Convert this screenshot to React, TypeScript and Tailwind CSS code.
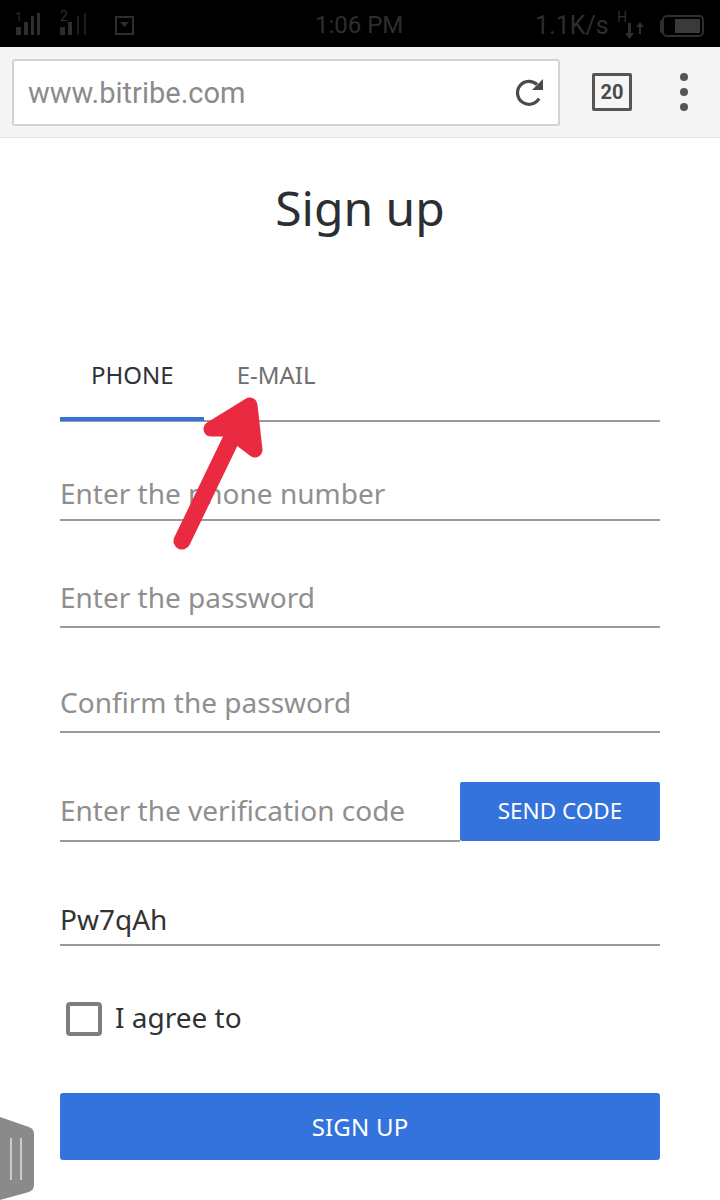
const noto = "font-['Noto_Sans',sans-serif]";

function Field({ text, dark, height }: { text: string; dark?: boolean; height: string }) {
  return (
    <div className={`flex items-center border-b-2 border-[#9a9a9a] pb-[2px] ${height} ${dark ? "text-[#333]" : "text-[#8f8f8f]"} text-[28px] leading-none`}>
      {text}
    </div>
  );
}

export default function App() {
  return (
    <div className={`relative w-[720px] h-[1200px] overflow-hidden bg-white ${noto}`}>
      <div className="flex h-[47px] items-center bg-black pt-[3px] font-['Roboto',sans-serif] text-[#2e2e2e]">
        <svg width="140" height="36" viewBox="0 0 140 36" className="ml-[12px] shrink-0" fill="#2e2e2e">
          <text x="3" y="14" fontSize="13">1</text>
          <rect x="4" y="20" width="5" height="8" />
          <rect x="12" y="15" width="4" height="13" />
          <rect x="19" y="9" width="3" height="19" />
          <rect x="25" y="6" width="3" height="22" />
          <text x="48" y="14" fontSize="14">2</text>
          <rect x="48" y="20" width="5" height="8" />
          <rect x="56" y="15" width="4" height="13" />
          <rect x="65" y="9" width="2" height="19" fill="#1d1d1d" />
          <rect x="72" y="6" width="2" height="22" fill="#1d1d1d" />
          <rect x="104" y="10" width="17" height="17" fill="none" stroke="#2e2e2e" strokeWidth="2" />
          <path d="M108 15h9l-4.500 5z" />
        </svg>
        <span className="ml-[163px] w-[90px] shrink-0 whitespace-nowrap text-[24px] leading-none">1:06 PM</span>
        <span className="ml-[130px] w-[73px] shrink-0 whitespace-nowrap text-[25px] leading-none">1.1K/s</span>
        <svg width="112" height="40" viewBox="0 0 112 40" className="shrink-0" fill="#2e2e2e">
          <text x="9" y="17" fontSize="14">H</text>
          <path d="M20 18h3v10h3l-4.500 6-4.500-6h3zM31 29v-7h-3l4-5 4 5h-3v7z" />
          <rect x="52" y="15" width="2" height="13" rx="1" />
          <rect x="55" y="11" width="40" height="20" rx="4" fill="none" stroke="#2e2e2e" strokeWidth="2" />
          <rect x="67" y="14" width="25" height="14" fill="#3a3a3a" />
        </svg>
      </div>

      <div className="flex h-[91px] items-center border-b border-[#e2e2e2] bg-[#f5f5f5] pl-[12px]">
        <div className="flex h-[67px] w-[548px] shrink-0 items-center justify-between rounded-[3px] border-2 border-[#d3d3d3] bg-white pl-[14px] pr-[12px] font-['Roboto',sans-serif] text-[29px] leading-none text-[#8b8b8b]">
          <span className="pt-[3px]">www.bitribe.com</span>
          <svg width="32" height="32" viewBox="0 0 32 32" fill="none">
            <path d="M25 22.500A11.500 11.500 0 1 1 23 8.500" stroke="#4a4a4a" strokeWidth="3.200" />
            <path d="M29 3v11H18z" fill="#4a4a4a" />
          </svg>
        </div>
        <div className="ml-[32px] flex h-[38px] w-[40px] shrink-0 items-center justify-center rounded-[2px] border-[3px] border-[#555] font-['Roboto',sans-serif] text-[20px] font-bold leading-none text-[#4a4a4a]">
          20
        </div>
        <div className="ml-[48px] flex shrink-0 flex-col gap-[7px]">
          <div className="size-[8px] rounded-full bg-[#555]" />
          <div className="size-[8px] rounded-full bg-[#555]" />
          <div className="size-[8px] rounded-full bg-[#555]" />
        </div>
      </div>

      <main className="flex flex-col px-[60px]">
        <h1 className="mt-[38px] h-[64px] text-center text-[48px] font-normal leading-[64px] text-[#2b2f33]">Sign up</h1>

        <div className="relative mt-[112px] flex h-[70px] items-center border-b-2 border-[#9a9a9a] pb-[22px] text-[24px] leading-none">
          <div className="absolute -bottom-[1px] left-0 h-[4px] w-[144px] bg-[#3473dc]" />
          <span className="ml-[31px] text-[#2f3337]">PHONE</span>
          <span className="ml-[63px] text-[#6f6f6f]">E-MAIL</span>
        </div>

        <div className="mt-[47px]"><Field text="Enter the phone number" height="h-[52px]" /></div>
        <div className="mt-[49px]"><Field text="Enter the password" height="h-[58px]" /></div>
        <div className="mt-[47px]"><Field text="Confirm the password" height="h-[58px]" /></div>

        <div className="mt-[49px] flex items-start">
          <div className="flex-1"><Field text="Enter the verification code" height="h-[60px]" /></div>
          <div className="flex h-[59px] w-[200px] items-center justify-center rounded-[2px] bg-[#3473dc] text-[22.500px] leading-none text-white">SEND CODE</div>
        </div>

        <div className="mt-[54px]"><Field text="Pw7qAh" dark height="h-[50px]" /></div>

        <div className="mt-[56px] flex items-center pl-[6px]">
          <div className="h-[34px] w-[36px] rounded-[4px] border-[4px] border-[#7e7e7e]" />
          <span className="ml-[13px] pb-[4px] text-[28px] leading-none text-[#2f3337]">I agree to</span>
        </div>

        <div className="mt-[57px] flex h-[67px] items-center justify-center rounded-[3px] bg-[#3473dc] text-[24px] leading-none tracking-[0.2px] text-white">SIGN UP</div>
      </main>

      <svg className="absolute left-[170px] top-[390px]" width="100" height="165" viewBox="170 390 100 165" fill="none">
        <path d="M182 541 L238 425" stroke="#ea2a40" strokeWidth="17" strokeLinecap="round" />
        <path d="M250 405 L211 429 L232 429 L243 441 L255 450 Z" fill="#ea2a40" stroke="#ea2a40" strokeWidth="15" strokeLinejoin="round" />
      </svg>

      <svg className="absolute left-0 top-[1115px]" width="36" height="85" viewBox="0 0 36 85">
        <path d="M0 2 L29 12 Q34 14 34 19 V70 Q34 75 29 77 L0 85 Z" fill="#8a8a8a" />
        <path d="M11 23V65M21 23V65" stroke="#c9c9c9" strokeWidth="2" />
      </svg>
    </div>
  );
}
